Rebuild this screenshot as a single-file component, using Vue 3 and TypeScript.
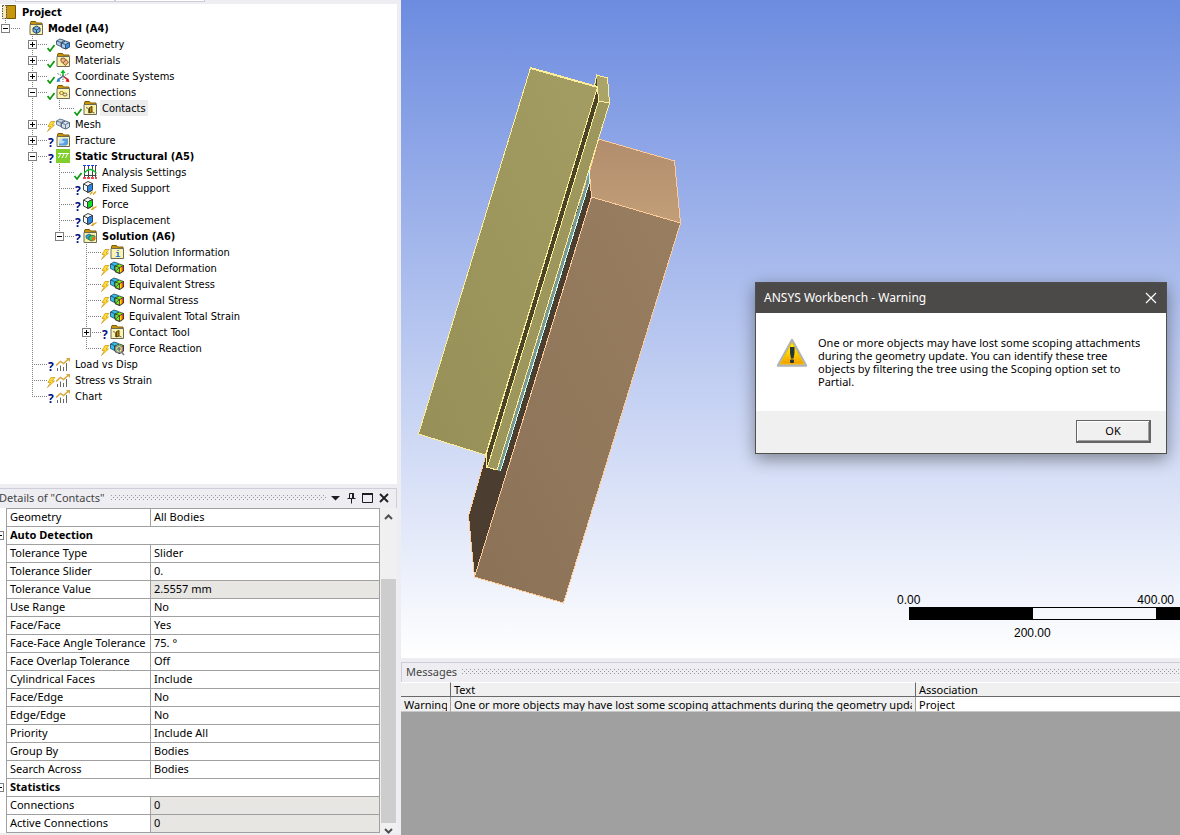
<script setup lang="ts">
import { computed, ref } from 'vue'

type Status = 'ok' | 'bolt' | 'ask' | ''

interface Node {
  label: string
  level: number
  icon: string
  status?: Status
  box?: '+' | '-'
  bold?: boolean
  selected?: boolean
}

const nodes: Node[] = [
  { label: 'Model (A4)', level: 0, icon: 'model', box: '-', bold: true },
  { label: 'Geometry', level: 1, icon: 'geometry', status: 'ok', box: '+' },
  { label: 'Materials', level: 1, icon: 'materials', status: 'ok', box: '+' },
  { label: 'Coordinate Systems', level: 1, icon: 'axes', status: 'ok', box: '+' },
  { label: 'Connections', level: 1, icon: 'connections', status: 'ok', box: '-' },
  { label: 'Contacts', level: 2, icon: 'contacts', status: 'ok', selected: true },
  { label: 'Mesh', level: 1, icon: 'mesh', status: 'bolt', box: '+' },
  { label: 'Fracture', level: 1, icon: 'fracture', status: 'ask', box: '+' },
  { label: 'Static Structural (A5)', level: 1, icon: 'static', status: 'ask', box: '-', bold: true },
  { label: 'Analysis Settings', level: 2, icon: 'settings', status: 'ok' },
  { label: 'Fixed Support', level: 2, icon: 'support', status: 'ask' },
  { label: 'Force', level: 2, icon: 'force', status: 'ask' },
  { label: 'Displacement', level: 2, icon: 'displacement', status: 'ask' },
  { label: 'Solution (A6)', level: 2, icon: 'solution', status: 'ask', box: '-', bold: true },
  { label: 'Solution Information', level: 3, icon: 'info', status: 'bolt' },
  { label: 'Total Deformation', level: 3, icon: 'result', status: 'bolt' },
  { label: 'Equivalent Stress', level: 3, icon: 'result', status: 'bolt' },
  { label: 'Normal Stress', level: 3, icon: 'result', status: 'bolt' },
  { label: 'Equivalent Total Strain', level: 3, icon: 'result', status: 'bolt' },
  { label: 'Contact Tool', level: 3, icon: 'contacts', status: 'ask', box: '+' },
  { label: 'Force Reaction', level: 3, icon: 'reaction', status: 'bolt' },
  { label: 'Load vs Disp', level: 1, icon: 'chart', status: 'ask' },
  { label: 'Stress vs Strain', level: 1, icon: 'chart', status: 'bolt' },
  { label: 'Chart', level: 1, icon: 'chart', status: 'ask' },
]

// True when a later sibling exists at `level` before the branch closes.
function continues(index: number, level: number): boolean {
  for (let i = index + 1; i < nodes.length; i++) {
    if (nodes[i].level < level) return false
    if (nodes[i].level === level) return true
  }
  return false
}

const rows = computed(() =>
  nodes.map((node, index) => ({
    ...node,
    guides: Array.from({ length: node.level }, (_, l) => continues(index, l)),
    more: continues(index, node.level),
  })),
)

interface Detail {
  name: string
  value?: string
  group?: boolean
  locked?: boolean
}

const details: Detail[] = [
  { name: 'Geometry', value: 'All Bodies' },
  { name: 'Auto Detection', group: true },
  { name: 'Tolerance Type', value: 'Slider' },
  { name: 'Tolerance Slider', value: '0.' },
  { name: 'Tolerance Value', value: '2.5557 mm', locked: true },
  { name: 'Use Range', value: 'No' },
  { name: 'Face/Face', value: 'Yes' },
  { name: 'Face-Face Angle Tolerance', value: '75. °' },
  { name: 'Face Overlap Tolerance', value: 'Off' },
  { name: 'Cylindrical Faces', value: 'Include' },
  { name: 'Face/Edge', value: 'No' },
  { name: 'Edge/Edge', value: 'No' },
  { name: 'Priority', value: 'Include All' },
  { name: 'Group By', value: 'Bodies' },
  { name: 'Search Across', value: 'Bodies' },
  { name: 'Statistics', group: true },
  { name: 'Connections', value: '0', locked: true },
  { name: 'Active Connections', value: '0', locked: true },
]

const dialogOpen = ref(true)
</script>

<template>
  <div class="app">
    <svg class="defs" width="0" height="0" aria-hidden="true">
      <defs>
        <pattern id="grip" width="4" height="4" patternUnits="userSpaceOnUse">
          <rect width="1" height="1" fill="#999" />
          <rect x="2" y="2" width="1" height="1" fill="#999" />
        </pattern>
        <linearGradient id="sky" x1="0" y1="0" x2="0" y2="1">
          <stop offset="0" stop-color="#fff200" />
          <stop offset="0.4" stop-color="#fce000" />
          <stop offset="1" stop-color="#f59a00" />
        </linearGradient>
        <symbol id="folder" viewBox="0 0 16 16">
          <path d="M2 1.5h4.5l1 1.500H13v4H1.500V3z" fill="#c8960c" stroke="#7d5c08" />
          <path d="M1 4.500h12.500V14.500H1z" fill="#fbf3b0" stroke="#6e6a58" />
        </symbol>
        <symbol id="cube" viewBox="0 0 16 16">
          <path d="M.5 4L5 1.500 9.500 3.500V10L5.500 12.500 .5 10z" fill="#f4f6f8" stroke="#444" />
          <path d="M.5 4L4.500 6V12M4.500 6L9.500 3.500" fill="none" stroke="#444" />
        </symbol>
        <symbol id="i-model" viewBox="0 0 16 16">
          <use href="#folder" />
          <path d="M4 8l3.500-2L11 8v3.500L7.500 13.500 4 11.500z" fill="#7db4ec" stroke="#26456b" />
          <path d="M4 8l3.500 2L11 8M7.500 10v3" fill="none" stroke="#26456b" />
        </symbol>
        <symbol id="i-geometry" viewBox="0 0 16 16">
          <path d="M.5 5L4 3 8.500 4.500V9L5 10.500.5 8.500z" fill="#b4cce8" stroke="#4a5e78" />
          <path d="M.5 5L5 6.500 8.500 4.500M5 6.500v4" fill="none" stroke="#4a5e78" />
          <path d="M5.500 7L9.500 5 13.500 6.500V11L10 13 5.500 11.500z" fill="#a4ccf4" stroke="#3a4e68" />
          <path d="M9.500 8.500L13.500 6.500V11L9.500 13z" fill="#3c90e4" stroke="#3a4e68" />
          <path d="M5.500 7L9.500 8.500" stroke="#3a4e68" />
        </symbol>
        <symbol id="i-mesh" viewBox="0 0 16 16">
          <path d="M.5 5L4 3 8.500 4.500V9L5 10.500.5 8.500z" fill="#ccdaea" stroke="#66788e" />
          <path d="M.5 5L5 6.500 8.500 4.500M5 6.500v4" fill="none" stroke="#66788e" />
          <path d="M5.500 7L9.500 5 13.500 6.500V11L10 13 5.500 11.500z" fill="#d3e0ee" stroke="#55677d" />
          <path d="M5.500 7L9.500 8.500 13.500 6.500M9.500 8.500V13" fill="none" stroke="#66788e" />
        </symbol>
        <symbol id="i-materials" viewBox="0 0 16 16">
          <use href="#folder" />
          <path d="M5 6.500l3-.5 4.500 4-3 3.500-4.500-4z" fill="#f2b684" stroke="#8c5a34" />
          <path d="M7 11l3-3.500" stroke="#8c5a34" />
        </symbol>
        <symbol id="i-axes" viewBox="0 0 16 16">
          <path d="M7 8V3" stroke="#00b020" stroke-width="1.500" />
          <path d="M4.500 5L7 1.500l2.500 3.500z" fill="#00c020" />
          <path d="M7 8l5 4" stroke="#e00000" stroke-width="1.500" />
          <path d="M13.500 14L9.500 13.500l2.500-3.500z" fill="#e80000" />
          <path d="M7 8l-5 4" stroke="#2070d0" stroke-width="1.500" />
          <path d="M.5 14L4.500 13.500 2 10z" fill="#2080e0" />
          <path d="M1.500 5.500l10 5M12.500 5.500l-10 5M7 8v6" stroke="#777" stroke-dasharray="1.500 1" />
        </symbol>
        <symbol id="i-connections" viewBox="0 0 16 16">
          <use href="#folder" />
          <ellipse cx="5.500" cy="9" rx="2" ry="1.500" fill="none" stroke="#9b7a12" />
          <ellipse cx="9" cy="10.500" rx="2" ry="1.500" fill="none" stroke="#7b6a42" />
        </symbol>
        <symbol id="i-contacts" viewBox="0 0 16 16">
          <use href="#folder" />
          <path d="M3 7.500l2.500 1v4.500M11.500 13L9 12" fill="none" stroke="#6e6a58" />
          <path d="M6.500 7.500L9 6.500v5.500L6.500 13z" fill="#b8880c" stroke="#5c4206" />
        </symbol>
        <symbol id="i-fracture" viewBox="0 0 16 16">
          <use href="#folder" />
          <path d="M3 8L5 6.500h7v5.500L10 13.500H3z" fill="#b8dcf8" />
          <path d="M7 6.500h5v5.500L10 13.500H3v-2h4L9 9.500 6 8.500z" fill="#5a9fe0" />
        </symbol>
        <symbol id="i-static" viewBox="0 0 16 16">
          <path d="M0 1h14v14H0z" fill="#7fce2b" />
          <path d="M2 5.500h11" stroke="#fff" />
          <path d="M4.500 6l-2 4M8 6l-2 4M11.500 6l-2 4" stroke="#fff" />
        </symbol>
        <symbol id="i-settings" viewBox="0 0 16 16">
          <path d="M1.500 2v11M5.500 2v11M9.500 2v11M12.500 2v11" stroke="#444" />
          <path d="M1 11.500h12.500" stroke="#444" />
          <path d="M1 9.500Q7 1.500 13.500 9.500" fill="none" stroke="#10c030" stroke-width="1.300" />
          <path d="M0 1.500h3M4 1.500h3M8 1.500h3M12 1.500h2" stroke="#2040f0" />
          <path d="M0 14h3M4 14h3M8 14h3M12 14h2" stroke="#e01010" stroke-width="1.500" />
        </symbol>
        <symbol id="i-support" viewBox="0 0 16 16">
          <use href="#cube" />
          <path d="M4.500 6l5-2.500V10l-5 2.500z" fill="#2f86e0" stroke="#345" />
          <path d="M7 14.500l2.500-3M10 14.500l3-3" stroke="#d8a420" stroke-width="1.300" />
        </symbol>
        <symbol id="i-force" viewBox="0 0 16 16">
          <use href="#cube" />
          <path d="M4.500 6l5-2.500V10l-5 2.500z" fill="#10e020" stroke="#343" />
          <path d="M9.500 13l4-2.500" stroke="#d8a420" stroke-width="1.300" />
          <path d="M7.500 14l3-3.500v3.500z" fill="#d8a420" />
        </symbol>
        <symbol id="i-displacement" viewBox="0 0 16 16">
          <use href="#cube" />
          <path d="M4.500 6l5-2.500V10l-5 2.500z" fill="#2f86e0" stroke="#345" />
          <path d="M9.500 13l4-2.500" stroke="#d8a420" stroke-width="1.300" />
          <path d="M7.500 14l3-3.500v3.500z" fill="#d8a420" />
        </symbol>
        <symbol id="rainbow" viewBox="0 0 16 16">
          <path d="M.5 4L4 2l4.500 1.500V8.500L4.500 10.500.5 8.500z" fill="#30c0f0" stroke="#245" stroke-width=".8" />
          <path d="M4.500 5.500L8.500 3.500v5l-4 2z" fill="#30d0a0" />
          <path d="M.5 4l4 1.500v5" fill="none" stroke="#245" stroke-width=".8" />
          <path d="M5 6L9.500 4l4 1.500V11L9.500 13.500l-4.500-2z" fill="#7ce820" stroke="#333" stroke-width=".8" />
          <path d="M9.500 7.500l4-2V11l-4 2.500z" fill="#f85010" />
          <path d="M9.500 7.500l2-1v5.500l-2 1.500z" fill="#ffe000" />
          <path d="M5 6l4.500 1.500v6M9.500 7.500l4-2V11L9.500 13.500l-4.500-2z" fill="none" stroke="#333" stroke-width=".8" />
        </symbol>
        <symbol id="i-solution" viewBox="0 0 16 16">
          <use href="#folder" />
          <path d="M3 7.500L6 6l2 1v4l-2.500.500L3 10z" fill="#28a8d8" stroke="#245" stroke-width=".6" />
          <path d="M6 8.500L9 7l3 1v3.500L9 13l-3-1z" fill="#40d050" stroke="#333" stroke-width=".6" />
          <path d="M9 9.500L12 8.500v3L9 12.700z" fill="#f07010" />
        </symbol>
        <symbol id="i-info" viewBox="0 0 16 16">
          <use href="#folder" />
          <text x="5" y="13" class="info-mark">i</text>
        </symbol>
        <symbol id="i-result" viewBox="0 0 16 16"><use href="#rainbow" /></symbol>
        <symbol id="i-reaction" viewBox="0 0 16 16">
          <use href="#rainbow" />
          <circle cx="9" cy="9" r="3.500" fill="#fff" fill-opacity=".5" stroke="#888" stroke-width="1.200" />
          <path d="M9 7v4M7 9h4" stroke="#666" />
          <path d="M11.500 12l2.500 3" stroke="#777" stroke-width="1.500" />
        </symbol>
        <symbol id="i-chart" viewBox="0 0 16 16">
          <path d="M1.500 12v3M4.500 9.500V15M7.500 11v4M10.500 7v8" stroke="#666" />
          <path d="M0 9.500L4.500 5.500 7.500 7.500 12.500 3" fill="none" stroke="#d8a83c" stroke-width="1.500" />
          <path d="M10 2h4v4z" fill="#d8a83c" />
        </symbol>
      </defs>
    </svg>

    <aside class="side">
      <div class="tabs"><span class="tab first"></span><span class="tab"></span></div>
      <nav class="tree" aria-label="Outline">
        <div class="row project">
          <svg class="book" viewBox="0 0 16 16" aria-hidden="true">
            <path d="M4.500 1.500h9v13h-9z" fill="#c8960c" stroke="#6e5208" />
            <path d="M.5 1.500h4v13h-4z" fill="#f6e9b4" stroke="#555" stroke-dasharray="1.500 1" />
          </svg>
          <span class="label bold">Project</span>
        </div>
        <div v-for="(row, i) in rows" :key="i" class="row">
          <span v-for="(on, g) in row.guides" :key="g" class="guide" :class="{ line: on }"></span>
          <span class="branch" :class="{ more: row.more }">
            <button v-if="row.box" class="box" type="button" :aria-label="'Toggle ' + row.label">
              <svg viewBox="0 0 9 9" aria-hidden="true">
                <path d="M2 4.500h5" stroke="#000" />
                <path v-if="row.box === '+'" d="M4.500 2v5" stroke="#000" />
              </svg>
            </button>
          </span>
          <span class="status">
            <svg v-if="row.status === 'ok'" viewBox="0 0 9 16" aria-hidden="true">
              <path d="M.5 12l2.500 3L7.500 9" fill="none" stroke="#0a9a0a" stroke-width="1.700" />
            </svg>
            <svg v-else-if="row.status === 'bolt'" viewBox="0 0 9 16" aria-hidden="true">
              <path d="M4 5.500L1 10.500h2.500L.5 15.500 7.500 9H5L8 5.500z" fill="#ffe030" stroke="#c89010" stroke-width=".7" />
            </svg>
            <b v-else-if="row.status === 'ask'">?</b>
          </span>
          <svg class="icon" viewBox="0 0 16 16" aria-hidden="true"><use :href="'#i-' + row.icon" /></svg>
          <span class="label" :class="{ bold: row.bold, selected: row.selected }">{{ row.label }}</span>
        </div>
      </nav>

      <section class="details" aria-label="Details">
        <header class="pane-head">
          <h2>Details of "Contacts"</h2>
          <svg class="grip" aria-hidden="true"><rect width="100%" height="5" fill="url(#grip)" /></svg>
          <button type="button" aria-label="Menu"><svg viewBox="0 0 12 12"><path d="M1 4h9L5.500 8.500z" fill="#1e1e1e" /></svg></button>
          <button type="button" aria-label="Pin"><svg viewBox="0 0 12 12"><path d="M3.500 1.500h4v5h-4zM1.500 6.500h8M5.500 7v4.500" fill="none" stroke="#1e1e1e" /><path d="M7 1v5" stroke="#1e1e1e" stroke-width="2" /></svg></button>
          <button type="button" aria-label="Maximize"><svg viewBox="0 0 12 12"><path d="M.5 2v8.500h10V2" fill="none" stroke="#1e1e1e" /><path d="M0 2h11" stroke="#1e1e1e" stroke-width="2" /></svg></button>
          <button type="button" aria-label="Close"><svg viewBox="0 0 12 12"><path d="M2 2l8 8M10 2l-8 8" stroke="#1e1e1e" stroke-width="1.800" /></svg></button>
        </header>
        <div class="details-body">
          <div class="gutter">
            <span v-for="(d, i) in details" :key="i" class="slot"><button v-if="d.group" type="button" class="fold" :aria-label="'Collapse ' + d.name"></button></span>
          </div>
          <table class="props">
            <colgroup><col class="name-col" /><col /></colgroup>
            <tbody>
              <tr v-for="d in details" :key="d.name">
                <th v-if="d.group" colspan="2" class="group">{{ d.name }}</th>
                <template v-else>
                  <th scope="row">{{ d.name }}</th>
                  <td :class="{ locked: d.locked }">{{ d.value }}</td>
                </template>
              </tr>
            </tbody>
          </table>
          <div class="scroll">
            <button type="button" aria-label="Scroll up"><svg viewBox="0 0 15 18"><path d="M4 11l3.500-3.500L11 11" /></svg></button>
            <div class="track"><div class="thumb"></div></div>
            <button type="button" class="down" aria-label="Scroll down"><svg viewBox="0 0 15 12"><path d="M4 6l3.500 3.500L11 6" /></svg></button>
          </div>
        </div>
      </section>
    </aside>

    <main class="main">
      <div class="view">
        <svg class="scene" viewBox="0 0 779 658" preserveAspectRatio="xMinYMin meet" shape-rendering="crispEdges" role="img" aria-label="Model">
          <defs>
            <linearGradient id="g-olive" x1="1" y1="0" x2="0" y2="1"><stop offset="0" stop-color="#a39d63" /><stop offset="1" stop-color="#969058" /></linearGradient>
            <linearGradient id="g-brown" x1="1" y1="0" x2="0" y2="1"><stop offset="0" stop-color="#997e60" /><stop offset="1" stop-color="#8b7257" /></linearGradient>
            <linearGradient id="g-tan" x1="0" y1="0" x2="0" y2="1"><stop offset="0" stop-color="#b18d6d" /><stop offset="1" stop-color="#c29e78" /></linearGradient>
          </defs>
          <g stroke="#ffcc99">
            <path d="M197.500 139L273.500 161 279.500 223 190.500 197 188.500 172z" fill="url(#g-tan)" />
            <path d="M188.500 174L190.500 197 73.500 577 67.500 516 85 455z" fill="#4b3d2f" />
            <path d="M190.500 197L279.500 223 162.500 603 73.500 577z" fill="url(#g-brown)" />
          </g>
          <path d="M188.500 172V182L99.500 471 94 470z" fill="#7c9694" />
          <path d="M188.500 168V182L99.500 471" fill="none" stroke="#c4fff0" />
          <g stroke="#ffee99">
            <path d="M193.500 86L195.500 75 206.500 78 208.500 103 197.500 101z" fill="#aba468" />
            <path d="M194 87L196 76V90z" fill="#4a4429" stroke="none" />
            <path d="M197.500 101L208.500 103 96 470 85.500 467z" fill="#9d975e" />
            <path d="M196.500 87L197.500 101 86.500 467 85 465V455z" fill="#4a4429" />
            <path d="M129.500 68L196.500 87 84.500 455 17.500 434z" fill="url(#g-olive)" />
            <path d="M129.500 68L196.500 87" stroke-width="2" />
          </g>
        </svg>
        <div class="scale">
          <div class="scale-top"><span>0.00</span><span>400.00</span></div>
          <div class="bar"><span class="seg dark"></span><span class="seg"></span><span class="seg dark rest"></span></div>
          <div class="scale-mid">200.00</div>
        </div>

        <div v-if="dialogOpen" class="dialog" role="alertdialog" aria-labelledby="dlg-title" aria-describedby="dlg-text">
          <header class="dlg-head">
            <h1 id="dlg-title">ANSYS Workbench - Warning</h1>
            <button type="button" aria-label="Close" @click="dialogOpen = false"><svg viewBox="0 0 12 12"><path d="M1 1l10 10M11 1L1 11" stroke="#fff" stroke-width="1.200" /></svg></button>
          </header>
          <div class="dlg-body">
            <svg class="warn" viewBox="0 0 32 30" aria-hidden="true">
              <path d="M16 2L30 27.500H2z" fill="#c4c8cc" stroke="#b0b4b8" stroke-width="2.500" stroke-linejoin="round" />
              <path d="M16 4.500L28 26H4z" fill="url(#sky)" stroke="#f0c000" stroke-linejoin="round" />
              <path d="M14 9h4.500v6l-1 5.500h-2.500l-1-5.500z" fill="#26343c" />
              <rect x="14" y="21.500" width="4" height="3.500" rx="1" fill="#26343c" />
            </svg>
            <p id="dlg-text">One or more objects may have lost some scoping attachments<br />during the geometry update. You can identify these tree<br />objects by filtering the tree using the Scoping option set to<br />Partial.</p>
          </div>
          <footer class="dlg-foot"><button type="button" class="ok" @click="dialogOpen = false">OK</button></footer>
        </div>
      </div>

      <section class="messages" aria-label="Messages">
        <header class="pane-head">
          <h2>Messages</h2>
          <svg class="grip" aria-hidden="true"><rect width="100%" height="5" fill="url(#grip)" /></svg>
        </header>
        <table class="log">
          <colgroup><col class="kind" /><col class="text" /><col /></colgroup>
          <thead><tr><th aria-label="Type"></th><th>Text</th><th>Association</th></tr></thead>
          <tbody>
            <tr>
              <td class="tinted"><div>Warning</div></td>
              <td class="tinted"><div>One or more objects may have lost some scoping attachments during the geometry updat</div></td>
              <td><div>Project</div></td>
            </tr>
          </tbody>
        </table>
      </section>
    </main>
  </div>
</template>

<style>
body { margin: 0; overflow: hidden; }
</style>

<style scoped>
* { box-sizing: border-box; }
.app {
  display: grid;
  grid-template-columns: 397px minmax(0, 1fr);
  column-gap: 4px;
  height: 100vh;
  overflow: hidden;
  background: #eeeef2;
  color: #000;
  font: 11px/16px "Noto Sans", "Open Sans", sans-serif;
}
.defs { position: absolute; }
button { padding: 0; border: 0; background: none; font: inherit; color: inherit; }
svg { display: block; }
h1, h2, p { margin: 0; font-weight: 400; }

.side { display: flex; flex-direction: column; min-height: 0; min-width: 0; }
.tabs { display: flex; height: 4px; padding-left: 15px; flex: none; }
.tab { width: 90px; height: 2px; border: 1px solid #ccceda; border-top: 0; background: #fff; }
.tab.first { width: 100px; }
.tree { flex: 1; min-height: 0; background: #fff; overflow: hidden; }
.row { display: flex; height: 16px; white-space: nowrap; }
.project { padding-left: 2px; }
.book { width: 16px; height: 16px; margin-right: 4px; }
.guide, .branch { flex: none; background-repeat: no-repeat; }
.guide { width: 27px; }
.guide.line {
  background-image: repeating-linear-gradient(#808080 0 1px, transparent 1px 2px);
  background-size: 1px 16px;
  background-position: 5px 0;
}
.branch {
  width: 20px;
  padding: 4px 0 0 1px;
  background-image:
    repeating-linear-gradient(#808080 0 1px, transparent 1px 2px),
    repeating-linear-gradient(90deg, #808080 0 1px, transparent 1px 2px);
  background-size: 1px 9px, 15px 1px;
  background-position: 5px 0, 5px 8px;
}
.branch.more { background-size: 1px 16px, 15px 1px; }
.box { display: block; width: 9px; height: 9px; background: #fff; outline: 1px solid #808080; outline-offset: -1px; }
.status { width: 9px; flex: none; color: #001080; }
.status svg { width: 9px; height: 16px; }
.status b { display: block; padding: 3px 0 0 1px; font: 700 12px/16px "Noto Sans", sans-serif; }
.icon { width: 16px; height: 16px; flex: none; }
.label { height: 16px; line-height: 18px; padding: 0 2px; margin-left: 1px; font-family: "DejaVu Sans Condensed", "DejaVu Sans", sans-serif; }
.project .label { padding: 0; margin: 0; }
.label.bold { font-weight: 700; }
.label.selected { background: #ededed; }
.info-mark { font: 700 9px "Liberation Mono", monospace; fill: #1070e0; }

.pane-head {
  display: flex;
  align-items: center;
  height: 20px;
  padding-bottom: 2px;
  border: 1px solid #ccceda;
  border-bottom: 0;
  color: #444;
}
.pane-head h2 { font-size: 11px; line-height: 16px; white-space: nowrap; }
.grip { flex: 1; height: 5px; min-width: 0; }
.pane-head button { width: 12px; margin-left: 4px; }
.pane-head button svg { width: 12px; height: 12px; }
.details { flex: none; margin-top: 4px; padding-bottom: 2px; }
.details .pane-head { border-left: 0; padding-right: 6px; }
.details h2 { margin: 0 6px 0 -1px; }
.details-body { display: flex; }
.gutter { width: 6px; background: #fff; overflow: hidden; flex: none; }
.slot { display: flex; align-items: center; height: 18px; }
.fold { width: 4px; height: 9px; border: 1px solid #808080; border-left: 0; background: linear-gradient(#000, #000) 0 3px / 2px 1px no-repeat; }
.props { flex: 1; border-collapse: collapse; table-layout: fixed; background: #fff; min-width: 0; line-height: 15px; }
.name-col { width: 144px; }
.props th, .props td {
  height: 18px;
  padding: 0 3px 2px;
  border: 1px solid #a0a0a0;
  text-align: left;
  font-weight: 400;
  white-space: nowrap;
}
.props th.group { font-weight: 700; }
.props td.locked { background: #e8e6e3; }
.scroll { display: flex; flex-direction: column; width: 17px; padding: 0 1px; background: #f0f0f0; flex: none; }
.scroll path { fill: none; stroke: #505050; stroke-width: 2; }
.scroll button { height: 18px; }
.scroll button.down { height: 10px; }
.track { flex: 1; padding-top: 53px; display: flex; }
.thumb { flex: 1; background: #cdcdcd; }

.main { display: grid; grid-template-rows: minmax(0, 658fr) minmax(0, 177fr); min-width: 0; min-height: 0; }
.view { position: relative; overflow: hidden; background: linear-gradient(#6d8ce0, #fff); }
.scene { width: 779px; height: 658px; fill: none; }
.scale { position: absolute; right: 0; bottom: 18px; width: 284px; font-family: "Liberation Sans", sans-serif; font-size: 12px; line-height: 14px; }
.scale-top { display: flex; justify-content: space-between; padding: 0 6px 0 1px; }
.bar { display: flex; height: 13px; margin-left: 13px; border: 1px solid #000; border-right: 0; }
.seg { width: 123px; }
.seg.dark { background: #000; }
.seg.rest { flex: 1; }
.scale-mid { padding: 6px 0 0 118px; }

.dialog {
  position: absolute;
  top: 282px;
  right: 13px;
  width: 412px;
  border: 1px solid #4f4f4c;
  background: #fff;
  box-shadow: 0 5px 16px rgba(0, 0, 0, .4);
}
.dlg-head { display: flex; align-items: center; justify-content: space-between; height: 30px; padding: 0 9px 0 8px; background: #4c4a48; color: #fff; }
.dlg-head h1 { font-size: 12px; line-height: 16px; }
.dlg-head svg { width: 12px; height: 12px; }
.dlg-body { display: flex; gap: 10px; height: 98px; padding: 23px 12px 0 20px; line-height: 13px; white-space: nowrap; }
.warn { width: 32px; height: 30px; flex: none; margin-top: 2px; }
.dlg-foot { display: flex; justify-content: flex-end; padding: 9px 15px 10px; background: #f0f0f0; }
.ok { width: 75px; height: 23px; border: 1px solid #646464; border-right-width: 2px; border-bottom-width: 2px; box-shadow: inset 1px 1px #fff, inset -1px -1px #a0a0a0; background: #f0f0f0; }

.messages { padding-top: 4px; background: linear-gradient(#eeeef2 0 24px, #a0a0a0 24px); }
.messages .pane-head { border-right: 0; }
.messages h2 { margin: 0 5px 0 4px; }
.log { width: 100%; border-collapse: separate; border-spacing: 0; table-layout: fixed; line-height: 13px; }
.kind { width: 49px; }
.text { width: 465px; }
.log th { height: 15px; padding: 0 3px; border-top: 1px solid #fff; border-bottom: 1px solid #696969; background: #f0f0f0; text-align: left; font-weight: 400; }
.log th + th { border-left: 1px solid #696969; }
.log td { height: 15px; padding: 1px 3px 0; background: #fff; border-bottom: 1px solid #c8c8c8; }
.log td + td { border-left: 1px solid #a0a0a0; }
.log td.tinted { background: #f0f0f0; }
.log td div { overflow: hidden; white-space: nowrap; }
</style>
